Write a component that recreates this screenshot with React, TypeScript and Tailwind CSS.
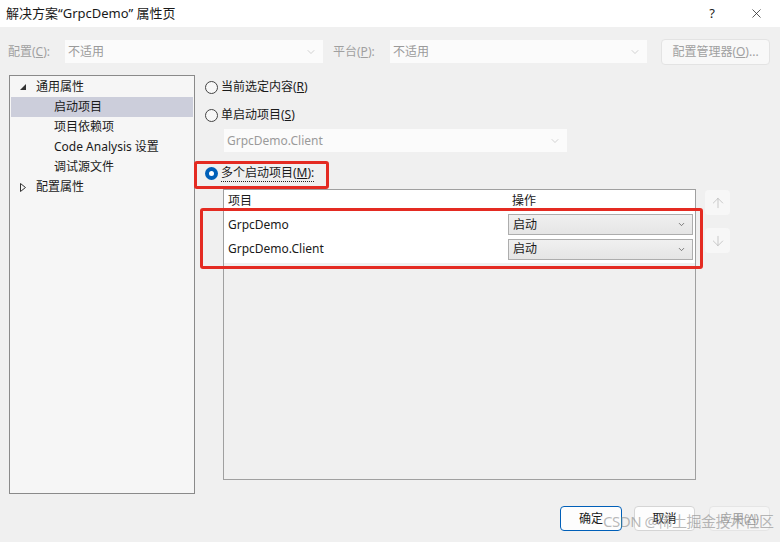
import { ArrowUp, ArrowDown, ChevronDown, X } from "lucide-react";

const font = { fontFamily: '"Noto Sans", "Noto Sans CJK SC", sans-serif' };

const Radio = ({ checked }: { checked?: boolean }) =>
  checked ? (
    <span className="flex h-[13px] w-[13px] items-center justify-center rounded-full bg-[#005fb8]">
      <span className="h-[5px] w-[5px] rounded-full bg-white" />
    </span>
  ) : (
    <span className="h-[13px] w-[13px] rounded-full border border-[#444] bg-[#f7f7f7]" />
  );

const DisabledSelect = ({ text, className }: { text: string; className: string }) => (
  <div className={`flex items-center justify-between bg-[#fbfbfb] pl-[3px] pr-[6px] text-[#9a9a9a] ${className}`}>
    <span>{text}</span>
    <ChevronDown size={12} strokeWidth={1.2} className="text-[#b5b5b5]" />
  </div>
);

const RowSelect = () => (
  <div className="flex h-[21px] flex-1 items-center justify-between border border-[#adadad] bg-gradient-to-b from-[#f0f0f0] to-[#e5e5e5] pl-[4px] pr-[6px] text-[#1a1a1a]">
    <span>启动</span>
    <ChevronDown size={9} strokeWidth={2} className="text-[#555]" />
  </div>
);

export default function App() {
  const tree = [
    { label: "启动项目", selected: true },
    { label: "项目依赖项" },
    { label: "Code Analysis 设置" },
    { label: "调试源文件" },
  ];

  return (
    <div className="relative flex h-[542px] w-[780px] flex-col overflow-hidden bg-[#f0f0f0] text-[12px] text-[#1a1a1a]" style={font}>
      {/* title bar */}
      <div className="flex h-[27px] items-center justify-between bg-white pl-[6px] pr-[16px] text-[13px]">
        <span>解决方案“GrpcDemo” 属性页</span>
        <div className="flex items-center gap-[34px] text-[#222]">
          <span className="text-[13px]">?</span>
          <X size={15} strokeWidth={1.2} />
        </div>
      </div>

      {/* config row */}
      <div className="flex h-[48px] items-center pl-[8px] pt-[1px] text-[#a0a0a0]">
        <span className="w-[57px]">配置(<u>C</u>):</span>
        <DisabledSelect text="不适用" className="h-[23px] w-[258px]" />
        <span className="ml-[10px] w-[57px]">平台(<u>P</u>):</span>
        <DisabledSelect text="不适用" className="h-[23px] w-[257px]" />
        <div className="ml-[14px] flex h-[26px] w-[109px] items-center justify-center rounded-[4px] border border-[#e3e3e3] bg-[#f8f8f8]">
          配置管理器(<u>O</u>)...
        </div>
      </div>

      {/* main */}
      <div className="flex h-[419px] pl-[9px]">
        {/* tree */}
        <div className="w-[186px] border border-[#8a8a8a] bg-[#f6f6f6] px-[1px] pt-[1px]">
          <div className="flex h-[20px] items-center">
            <svg width="6" height="6" viewBox="0 0 6 6" className="ml-[9px] mr-[10px]">
              <polygon points="6,0 6,6 0,6" fill="#333" />
            </svg>
            <span>通用属性</span>
          </div>
          {tree.map((t) => (
            <div key={t.label} className={`flex h-[20px] items-center pl-[43px] ${t.selected ? "bg-[#cccedb]" : ""}`}>
              {t.label}
            </div>
          ))}
          <div className="flex h-[20px] items-center">
            <svg width="6" height="9" viewBox="0 0 6 9" className="ml-[9px] mr-[10px]">
              <polygon points="0.5,0.5 5.5,4.5 0.5,8.5" fill="none" stroke="#333" strokeWidth="1" />
            </svg>
            <span>配置属性</span>
          </div>
        </div>

        {/* right */}
        <div className="ml-[9px] flex flex-1 flex-col">
          <div className="flex h-[24px] items-center gap-[3px] pl-[1px]">
            <Radio />
            <span>当前选定内容(<u>R</u>)</span>
          </div>
          <div className="mt-[4px] flex h-[24px] items-center gap-[3px] pl-[1px]">
            <Radio />
            <span>单启动项目(<u>S</u>)</span>
          </div>
          <DisabledSelect text="GrpcDemo.Client" className="ml-[20px] mt-[2px] h-[23px] w-[343px]" />
          <div className="relative mt-[9px] flex h-[24px] items-center gap-[3px] pl-[1px]">
            <Radio checked />
            <span className="border-b border-dotted border-[#222] leading-[16px]">多个启动项目(<u>M</u>):</span>
            <div className="absolute left-[-10px] top-0 h-[28px] w-[135px] rounded-[3px] border-[3px] border-[#e42b22]" />
          </div>

          <div className="mt-[4px] flex">
            <div className="relative ml-[19px] flex h-[291px] w-[473px] flex-col border border-[#a0a0a0]">
              <div className="flex h-[21px] items-center bg-white">
                <span className="w-[284px] pl-[4px]">项目</span>
                <span className="pl-[4px]">操作</span>
              </div>
              <div className="bg-white pb-[2px] pt-[1px]">
                <div className="flex h-[25px] items-center pr-[2px]">
                  <span className="w-[284px] pl-[4px]">GrpcDemo</span>
                  <RowSelect />
                </div>
                <div className="flex h-[24px] items-center pr-[2px]">
                  <span className="w-[284px] pl-[4px]">GrpcDemo.Client</span>
                  <RowSelect />
                </div>
              </div>
              <div className="flex-1 bg-[#f0f0f0]" />
              <div className="absolute left-[-24px] top-[18px] h-[61px] w-[503px] rounded-[3px] border-[3px] border-[#e42b22]" />
            </div>
            <div className="ml-[9px] flex flex-col gap-[13px] pt-[1px]">
              <div className="flex h-[25px] w-[25px] items-center justify-center rounded-[4px] bg-[#f7f7f7] text-[#b8b8b8]">
                <ArrowUp size={16} strokeWidth={1.1} />
              </div>
              <div className="flex h-[25px] w-[25px] items-center justify-center rounded-[4px] bg-[#f7f7f7] text-[#b8b8b8]">
                <ArrowDown size={16} strokeWidth={1.1} />
              </div>
            </div>
          </div>
        </div>
      </div>

      {/* footer */}
      <div className="flex justify-end gap-[12px] pr-[10px] pt-[12px]">
        <div className="flex h-[25px] w-[62px] items-center justify-center rounded-[4px] border-[1.5px] border-[#005fb8] bg-[#fdfdfd]">确定</div>
        <div className="flex h-[25px] w-[61px] items-center justify-center rounded-[4px] border border-[#d5d5d5] bg-[#fdfdfd]">取消</div>
        <div className="ml-[2px] flex h-[25px] w-[61px] items-center justify-center rounded-[4px] border border-[#e5e5e5] bg-[#f6f6f6] text-[#a5a5a5]">应用(<u>A</u>)</div>
      </div>

      {/* watermark */}
      <div className="pointer-events-none absolute left-[603px] top-[510px] whitespace-nowrap text-[15px] tracking-[-0.5px] text-[#8a8a8a]/60">
        CSDN @稀土掘金技术社区
      </div>
    </div>
  );
}
